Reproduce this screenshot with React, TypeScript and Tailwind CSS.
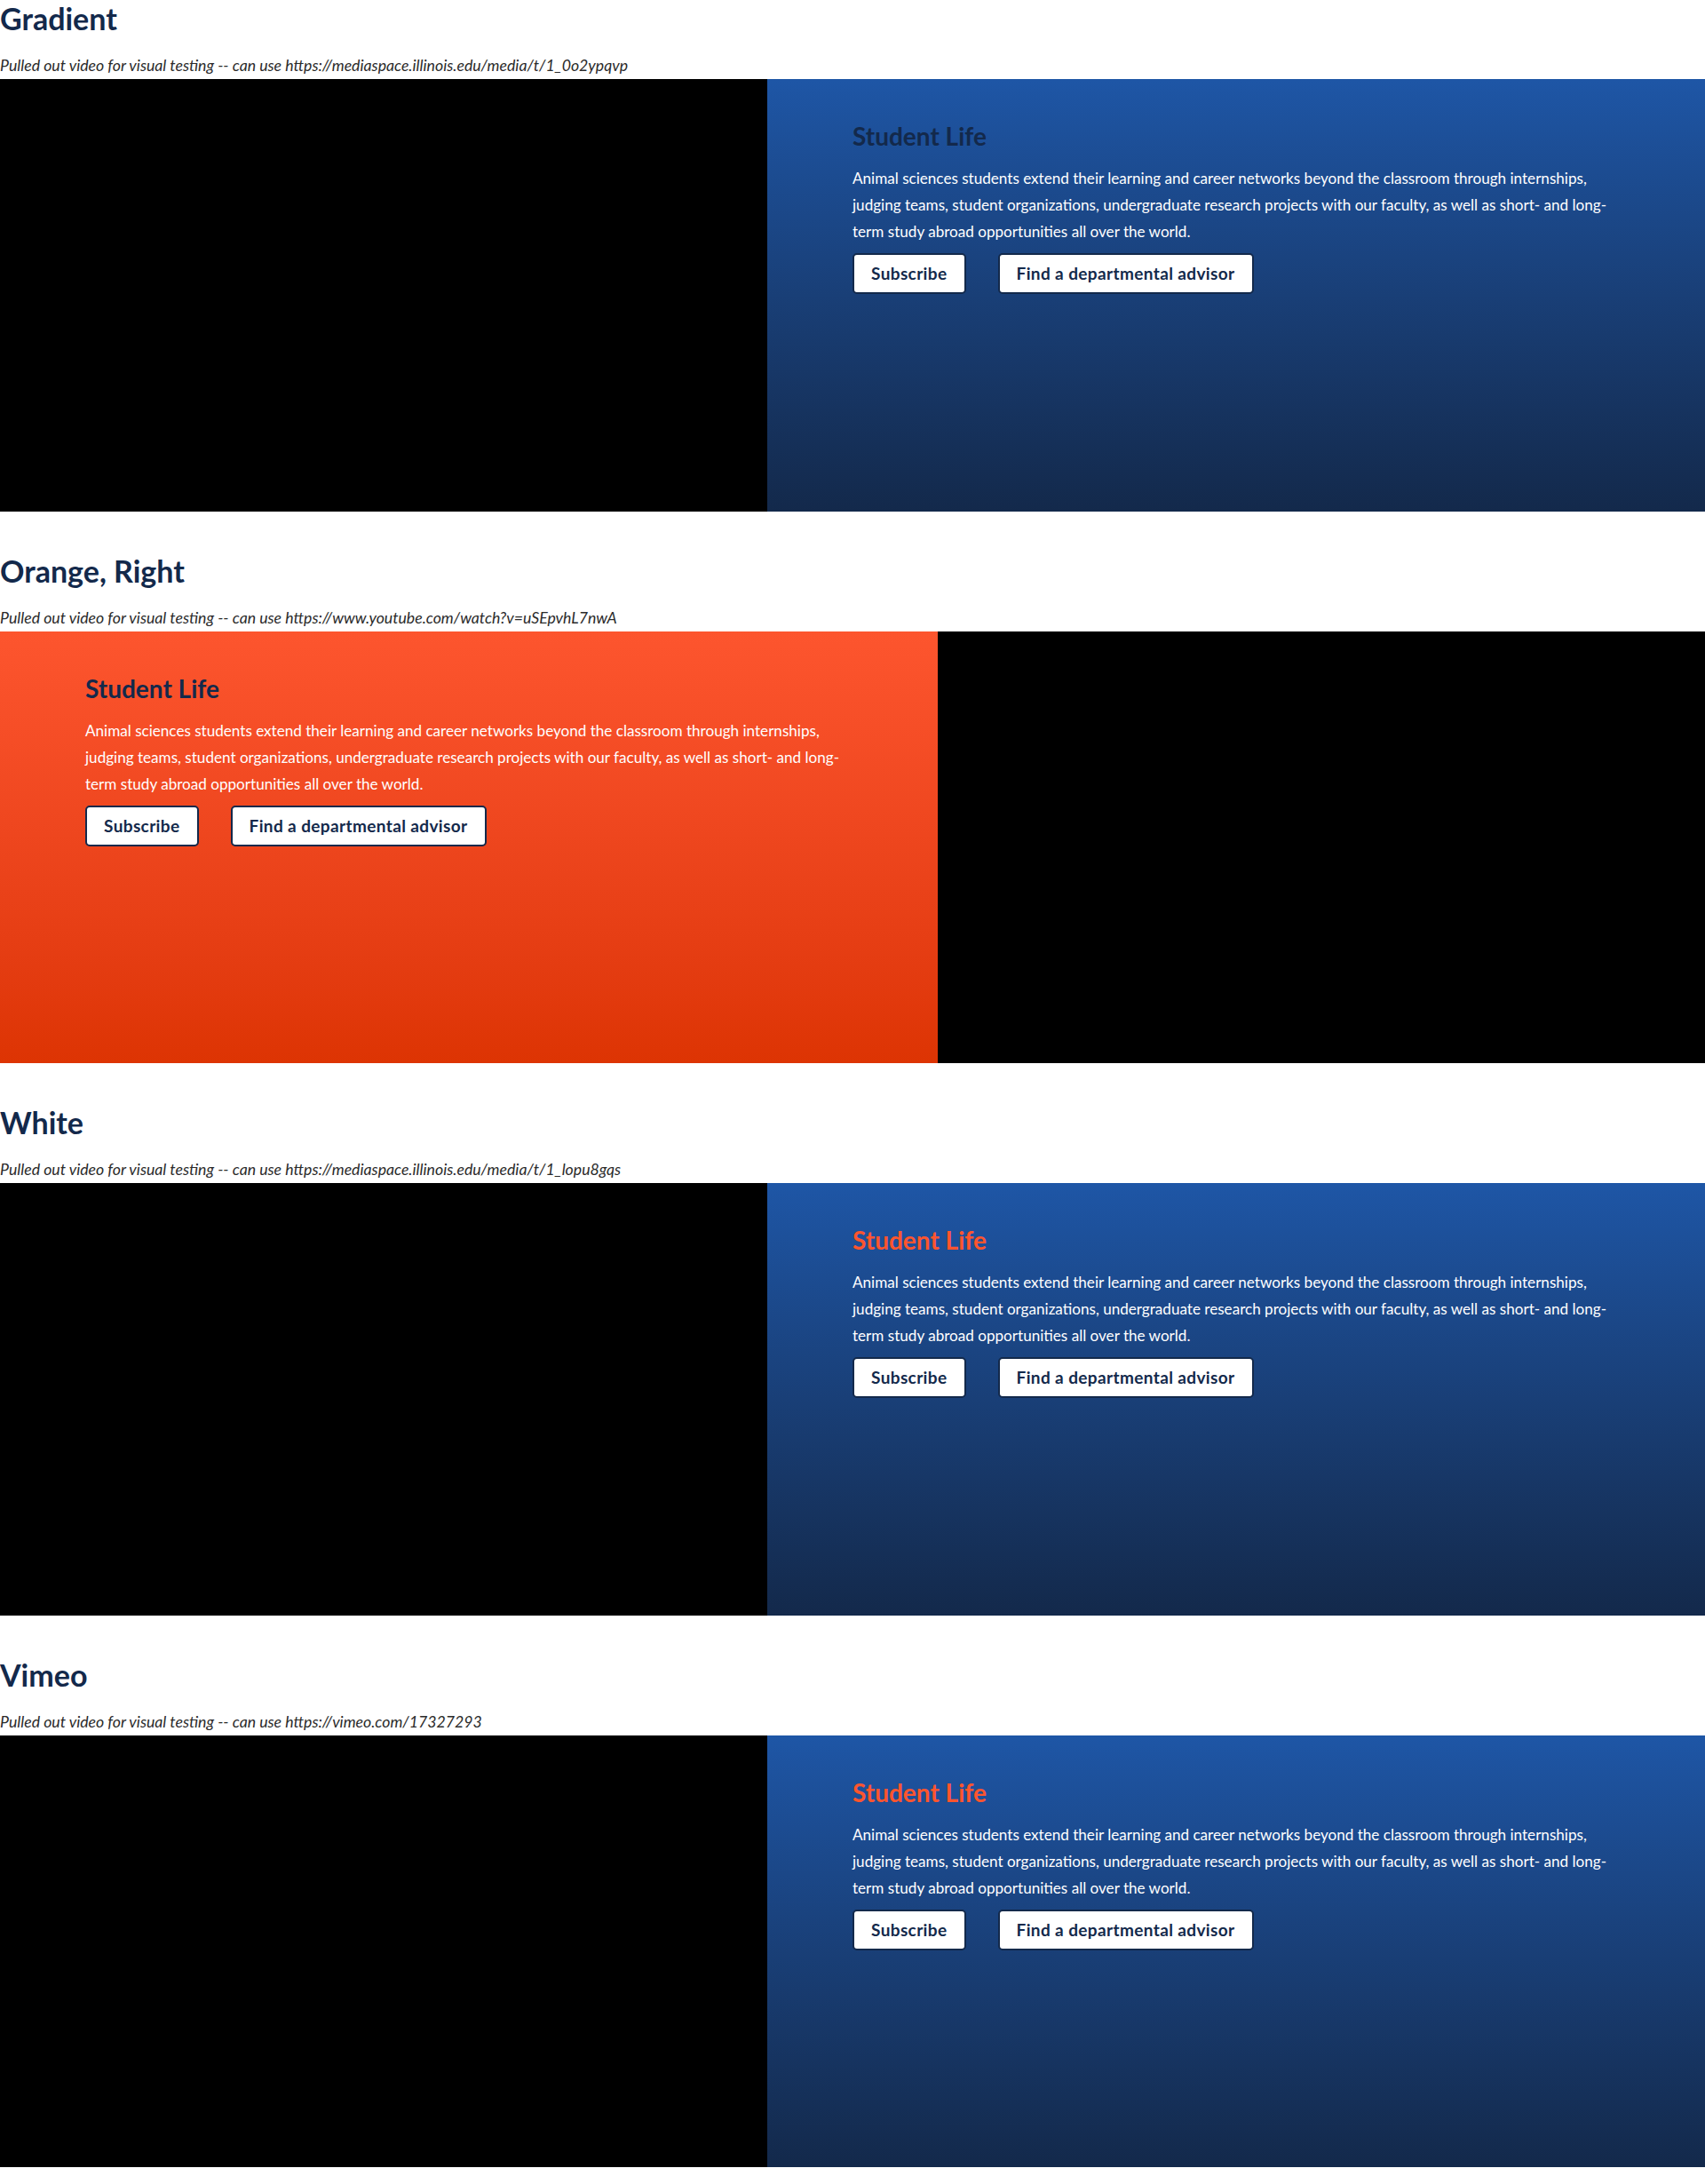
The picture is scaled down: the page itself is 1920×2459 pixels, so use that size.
import React from "react";

type Section = {
  title: string;
  url: string;
  orange: boolean;
  orangeHeading: boolean;
  videoLeft: boolean;
};

const sections: Section[] = [
  { title: "Gradient", url: "https://mediaspace.illinois.edu/media/t/1_0o2ypqvp", orange: false, orangeHeading: false, videoLeft: true },
  { title: "Orange, Right", url: "https://www.youtube.com/watch?v=uSEpvhL7nwA", orange: true, orangeHeading: false, videoLeft: false },
  { title: "White", url: "https://mediaspace.illinois.edu/media/t/1_lopu8gqs", orange: false, orangeHeading: true, videoLeft: true },
  { title: "Vimeo", url: "https://vimeo.com/17327293", orange: false, orangeHeading: true, videoLeft: true },
];

function Panel({ s }: { s: Section }) {
  return (
    <div
      className={
        s.orange
          ? "flex-1 bg-linear-to-b from-[#fd552e] to-[#dd3403] px-[96px] pt-[47px]"
          : "flex-1 bg-linear-to-b from-[#1e56a6] to-[#13294b] px-[96px] pt-[47px]"
      }
    >
      <h3
        className={
          s.orangeHeading
            ? "text-[28px] leading-[34px] font-bold text-[#ff552e]"
            : "text-[28px] leading-[34px] font-bold text-[#13294b]"
        }
      >
        Student Life
      </h3>
      <p className="mt-[16px] text-[17.1px] leading-[30px] text-white max-w-[864px]">
        Animal sciences students extend their learning and career networks beyond the classroom through internships,
        judging teams, student organizations, undergraduate research projects with our faculty, as well as short- and
        long-term study abroad opportunities all over the world.
      </p>
      <div className="mt-[9px] flex gap-[36px]">
        <a className="block rounded-[5px] border-2 border-[#13294b] bg-white px-[19px] py-[10px] text-[19px] leading-[22px] font-bold tracking-[0.02em] text-[#13294b]">
          Subscribe
        </a>
        <a className="block rounded-[5px] border-2 border-[#13294b] bg-white px-[19px] py-[10px] text-[19px] leading-[22px] font-bold tracking-[0.02em] text-[#13294b]">
          Find a departmental advisor
        </a>
      </div>
    </div>
  );
}

function Video() {
  return <div className="w-[45%] h-[486.5px] bg-black shrink-0" />;
}

export default function App() {
  return (
    <div className="bg-white pb-[19px]" style={{ fontFamily: "Lato, 'Open Sans', sans-serif" }}>
      {sections.map((s, i) => (
        <section key={s.title} className={i === 0 ? "" : "mt-[46px]"}>
          <h2 className="text-[34px] leading-[41px] font-bold text-[#13294b] mb-[21px]">{s.title}</h2>
          <p className="text-[17.7px] leading-[24px] italic text-[#2b2b2b] mb-[3px]">
            Pulled out video for visual testing -- can use {s.url}
          </p>
          <div className="flex">
            {s.videoLeft ? (
              <>
                <Video />
                <Panel s={s} />
              </>
            ) : (
              <>
                <Panel s={s} />
                <Video />
              </>
            )}
          </div>
        </section>
      ))}
    </div>
  );
}
